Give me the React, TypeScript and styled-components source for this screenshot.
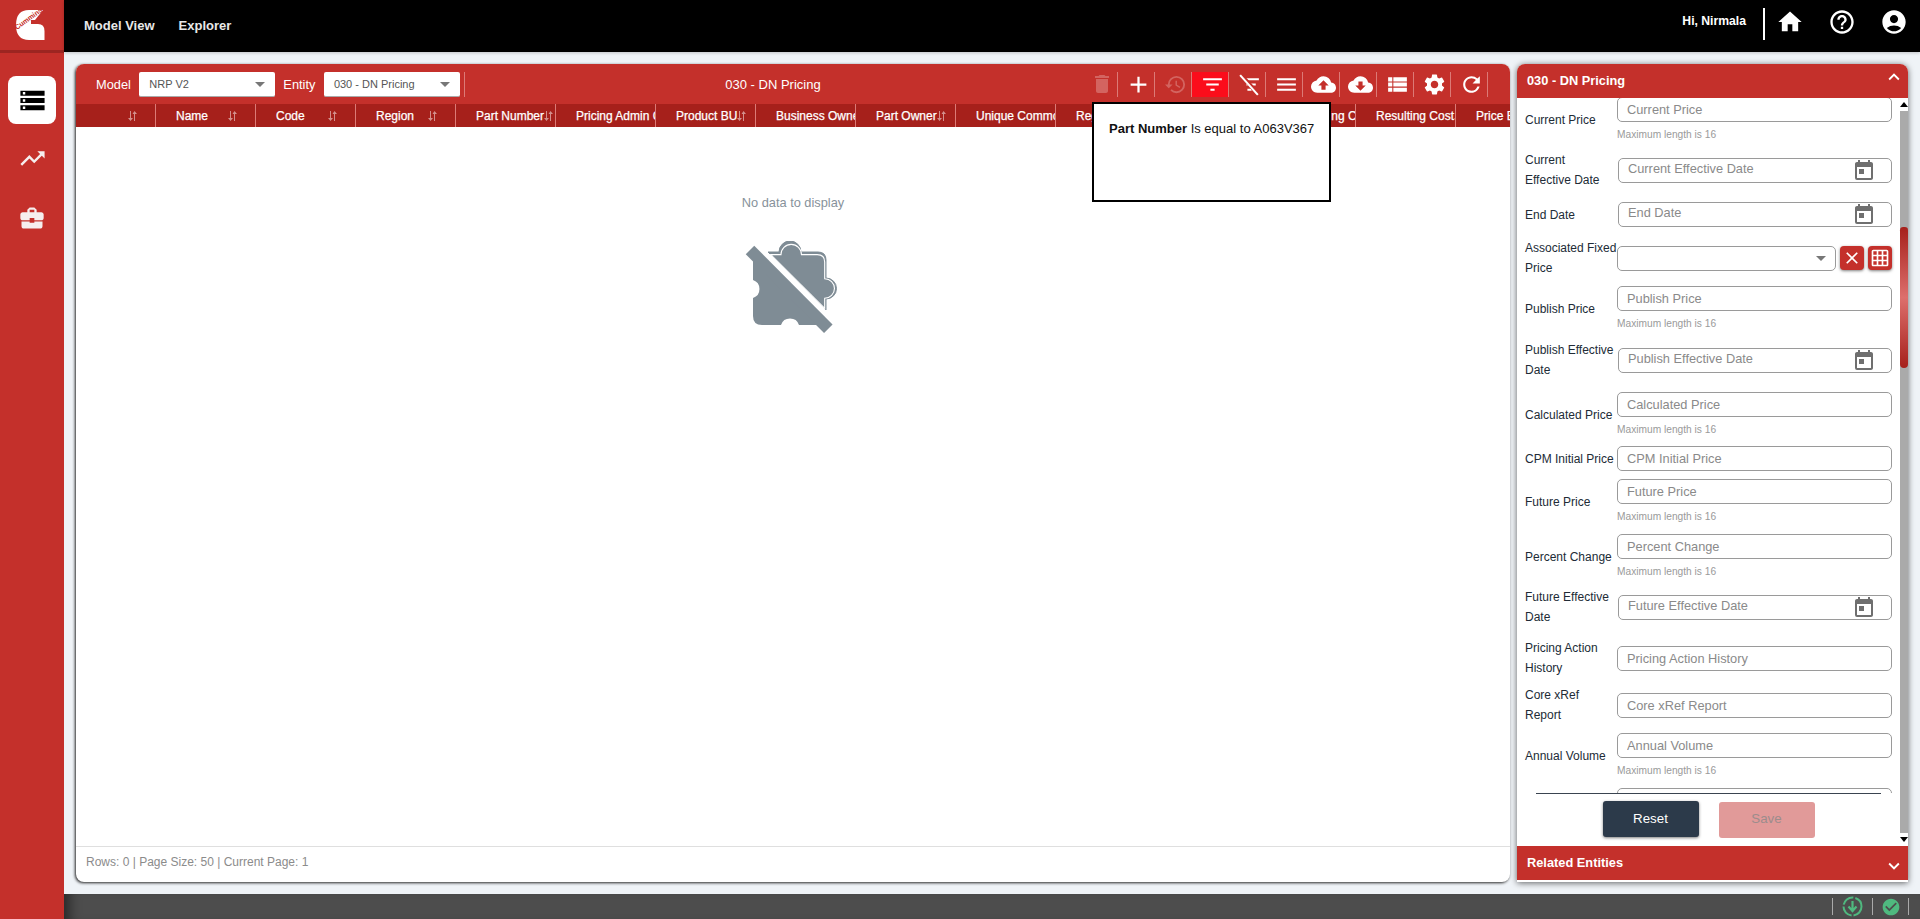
import { ReactNode } from "react";
import styled, { createGlobalStyle } from "styled-components";
import {
  MdAccountCircle,
  MdAdd,
  MdArrowDropDown,
  MdBusinessCenter,
  MdCheckCircle,
  MdClose,
  MdCloudDownload,
  MdCloudUpload,
  MdDelete,
  MdExpandLess,
  MdExpandMore,
  MdFilterList,
  MdGridOn,
  MdHelpOutline,
  MdHistory,
  MdHome,
  MdMenu,
  MdRefresh,
  MdSettings,
  MdStorage,
  MdToday,
  MdTrendingUp,
  MdViewList,
} from "react-icons/md";

const RED = "#c4302b";
const DARK_RED = "#a6201b";

const GlobalStyle = createGlobalStyle`
  html, body {
    margin: 0;
    height: 100%;
    overflow: hidden;
    background: #eff3f7;
    font-family: "Liberation Sans", Arial, sans-serif;
  }
  * { box-sizing: border-box; }
`;

const Shell = styled.div`
  display: flex;
  width: 1920px;
  height: 919px;
`;

const Sidebar = styled.aside`
  width: 64px;
  flex-shrink: 0;
  background: ${RED};
  display: flex;
  flex-direction: column;
  align-items: center;
`;

const LogoCell = styled.div`
  width: 100%;
  height: 53px;
  border-bottom: 3px solid #9c2521;
  display: flex;
  align-items: center;
  justify-content: center;
`;

const SideNav = styled.nav`
  display: flex;
  flex-direction: column;
  gap: 10px;
  padding-top: 23px;
`;

const SideItem = styled.div<{ $active?: boolean; $drop?: number }>`
  width: 48px;
  height: 48px;
  border-radius: 8px;
  margin-top: ${(p) => p.$drop ?? 0}px;
  display: flex;
  align-items: center;
  justify-content: center;
  background: ${(p) => (p.$active ? "#fff" : "transparent")};
  color: ${(p) => (p.$active ? "#000" : "#f6eeee")};
`;

const Main = styled.div`
  flex: 1;
  display: flex;
  flex-direction: column;
  min-width: 0;
`;

const TopBar = styled.header`
  height: 52px;
  background: #000;
  color: #fff;
  display: flex;
  align-items: center;
  padding: 0 12px 2px 20px;
  box-shadow: 0 1px 3px rgba(0, 0, 0, 0.2);
`;

const TopLink = styled.span`
  font-size: 13px;
  font-weight: 700;
  color: #e8e8e8;
  margin-right: 24px;
`;

const TopRight = styled.div`
  margin-left: auto;
  align-self: flex-start;
  padding-top: 8px;
  display: flex;
  align-items: flex-start;
`;

const Greeting = styled.span`
  font-size: 12.2px;
  font-weight: 700;
  padding-right: 17px;
  border-right: 2px solid #fff;
  height: 32px;
  line-height: 26px;
  margin-right: 11px;
`;

const TopIcon = styled.span`
  display: flex;
  width: 28px;
  margin-right: 24px;
  &:last-child {
    margin-right: 0;
  }
`;

const Content = styled.div`
  flex: 1;
  display: flex;
  gap: 7px;
  padding: 12px;
  min-height: 0;
`;

const GridWrap = styled.div`
  position: relative;
  width: 1434px;
  flex-shrink: 0;
`;

const GridPanel = styled.section`
  width: 100%;
  height: 100%;
  display: flex;
  flex-direction: column;
  background: #fff;
  border-radius: 8px;
  overflow: hidden;
  box-shadow: -1px 1px 3px rgba(0, 0, 0, 0.85);
`;

const Toolbar = styled.div`
  height: 40px;
  flex-shrink: 0;
  background: ${RED};
  color: #fff;
  display: flex;
  align-items: center;
  padding: 0 22px 0 20px;
`;

const ToolLabel = styled.span`
  font-size: 12.8px;
  margin-right: 8.5px;
`;

const RedSelect = styled.div`
  width: 136px;
  height: 25px;
  background: #fff;
  border-radius: 2px;
  border-bottom: 1px solid #aaa;
  color: #555;
  font-size: 11px;
  display: flex;
  align-items: center;
  justify-content: space-between;
  padding: 0 3px 0 10px;
  margin-right: 8px;
`;

const ToolDivider = styled.span`
  width: 1px;
  height: 25px;
  background: #dc7a76;
  margin-left: -4px;
`;

const Title = styled.div`
  flex: 1;
  text-align: center;
  font-size: 13px;
`;

const ToolButtons = styled.div`
  display: flex;
`;

const ToolButton = styled.span<{ $active?: boolean; $dim?: boolean }>`
  width: 37px;
  height: 25px;
  display: flex;
  align-items: center;
  justify-content: center;
  padding-left: 5px;
  border-right: 1px solid #dc7a76;
  background: ${(p) => (p.$active ? "#fb0d1b" : "transparent")};
  color: ${(p) => (p.$dim ? "rgba(255,255,255,0.25)" : "#fff")};
`;

const HeaderRow = styled.div`
  height: 23px;
  flex-shrink: 0;
  display: flex;
  background: ${DARK_RED};
  overflow: hidden;
`;

const HeaderCell = styled.div<{ $first?: boolean }>`
  width: ${(p) => (p.$first ? 80 : 100)}px;
  flex-shrink: 0;
  display: flex;
  align-items: center;
  overflow: hidden;
  white-space: nowrap;
  padding-left: ${(p) => (p.$first ? 0 : 20)}px;
  border-right: 1px solid #dc7a76;
  color: #fff;
  font-size: 12px;
  -webkit-text-stroke: 0.25px #fff;
`;

const HeaderText = styled.span`
  min-width: 52px;
  flex-shrink: 0;
`;

const SortIcon = styled.svg`
  width: 9px;
  height: 10px;
  flex-shrink: 0;
  color: rgba(255, 255, 255, 0.5);
`;

const GridBody = styled.div`
  flex: 1;
  display: flex;
  flex-direction: column;
  align-items: center;
  padding-top: 68px;
`;

const EmptyText = styled.div`
  font-size: 12.8px;
  line-height: 16px;
  color: #87929b;
  margin-bottom: 30px;
`;

const GridFooter = styled.div`
  height: 36px;
  flex-shrink: 0;
  border-top: 1px solid #dfdfdf;
  padding: 0 10px 5px;
  display: flex;
  align-items: center;
  font-size: 12px;
  color: #8b8b8b;
`;

const FilterTip = styled.div`
  position: absolute;
  left: 1016px;
  top: 38px;
  width: 239px;
  height: 100px;
  background: #fff;
  border: 2px solid #000;
  padding: 17px 15px;
  font-size: 13px;
  line-height: 16px;
  white-space: nowrap;
  color: #111;
  b {
    font-weight: 700;
  }
`;

const FormPanel = styled.aside`
  width: 391px;
  flex-shrink: 0;
  display: flex;
  flex-direction: column;
  background: #fff;
  border-radius: 8px 8px 0 0;
  overflow: hidden;
  box-shadow: 0 1px 6px rgba(0, 0, 0, 0.6);
`;

const PanelBar = styled.div`
  height: 34px;
  flex-shrink: 0;
  background: ${RED};
  color: #fff;
  font-size: 12.8px;
  font-weight: 700;
  display: flex;
  align-items: center;
  justify-content: space-between;
  padding: 0 3px 2px 10px;
`;

const Chevron = styled.span<{ $up?: boolean }>`
  display: flex;
  margin: ${(p) => (p.$up ? "0 0 6px" : "7px 0 0")};
`;

const PanelBody = styled.div`
  position: relative;
  flex: 1;
  min-height: 0;
  display: flex;
`;

const FormScroll = styled.div`
  flex: 1;
  overflow: hidden;
  padding: 0 8px;
`;

const FormList = styled.div`
  margin-top: -1px;
`;

const Row = styled.div<{ $gap: number; $h: number }>`
  display: grid;
  grid-template-columns: 92px 275px;
  height: ${(p) => p.$h}px;
  margin-top: ${(p) => p.$gap}px;
  align-items: start;
`;

const RowLabel = styled.label`
  align-self: center;
  font-size: 12px;
  line-height: 20px;
  color: #212b36;
  white-space: pre-line;
`;

const FieldBox = styled.div<{ $date?: boolean; $mid?: boolean }>`
  position: relative;
  align-self: ${(p) => (p.$mid ? "center" : "start")};
  padding-left: ${(p) => (p.$date ? 1 : 0)}px;
`;

const TextInput = styled.input<{ $date?: boolean }>`
  display: block;
  width: 100%;
  height: 25px;
  border: 1px solid #9a9a9a;
  border-radius: 5px;
  outline: none;
  background: #fff;
  padding: ${(p) => (p.$date ? "0 0 4px 9px" : "0 9px")};
  font-family: inherit;
  font-size: 12.8px;
  &::placeholder {
    color: #8a8a8a;
    opacity: 1;
  }
`;

const Hint = styled.div`
  font-size: 10.2px;
  line-height: 12px;
  margin-top: 7px;
  color: #9a9a9a;
`;

const CalendarIcon = styled.span`
  position: absolute;
  right: 16px;
  top: 1px;
  display: flex;
  color: #6f6f6f;
`;

const LookupWrap = styled.div`
  display: flex;
  gap: 4px;
  align-self: center;
  align-items: flex-start;
`;

const LookupSelect = styled.div`
  width: 219px;
  height: 25px;
  border: 1px solid #9a9a9a;
  border-radius: 5px;
  display: flex;
  align-items: center;
  justify-content: flex-end;
  padding-right: 2px;
  color: #777;
`;

const SquareButton = styled.span`
  width: 24px;
  height: 24px;
  border-radius: 4px;
  background: ${RED};
  color: #fff;
  display: flex;
  align-items: center;
  justify-content: center;
  box-shadow: 0 1px 3px rgba(0, 0, 0, 0.5);
`;

const Scrollbar = styled.div`
  width: 8px;
  flex-shrink: 0;
  display: flex;
  flex-direction: column;
  align-items: center;
  padding: 4px 0;
`;

const ScrollArrow = styled.span<{ $down?: boolean }>`
  width: 0;
  height: 0;
  flex-shrink: 0;
  border-left: 4px solid transparent;
  border-right: 4px solid transparent;
  ${(p) => (p.$down ? "border-top: 5px solid #000;" : "border-bottom: 5px solid #000;")}
`;

const ScrollTrack = styled.div`
  flex: 1;
  width: 100%;
  margin: 4px 0;
  background: #aaa;
  padding-top: 116px;
`;

const ScrollThumb = styled.div`
  height: 141px;
  border-radius: 4px 4px 5px 5px;
  background: linear-gradient(#a6201b, #dd6f6c 50%, #a6201b);
`;

const ActionBar = styled.div`
  position: absolute;
  left: 0;
  right: 8px;
  bottom: 0;
  height: 53px;
  background: #fff;
  display: flex;
  justify-content: center;
  gap: 20px;
  padding-top: 8px;
  &::before {
    content: "";
    position: absolute;
    left: 19px;
    right: 19px;
    top: 0;
    height: 1px;
    background: #3a4450;
  }
`;

const ActionButton = styled.span<{ $primary?: boolean }>`
  width: 96px;
  height: 36px;
  border-radius: 3px;
  margin-top: ${(p) => (p.$primary ? 0 : 1)}px;
  padding-bottom: ${(p) => (p.$primary ? 2 : 4)}px;
  display: flex;
  align-items: center;
  justify-content: center;
  font-size: 13.33px;
  background: ${(p) => (p.$primary ? "#2c3a4a" : "#e19a99")};
  color: ${(p) => (p.$primary ? "#fff" : "#9c8c8c")};
  box-shadow: ${(p) => (p.$primary ? "0 1px 3px rgba(0,0,0,0.5)" : "none")};
`;

const PanelStrip = styled.div`
  height: 2px;
  flex-shrink: 0;
  background: #fff;
`;

const StatusBar = styled.footer`
  height: 25px;
  flex-shrink: 0;
  background: #4d4d4d;
  box-shadow: inset 14px 0 12px -8px rgba(0, 0, 0, 0.45);
  display: flex;
  justify-content: flex-end;
  align-items: center;
  padding-right: 11px;
`;

const StatusCell = styled.span<{ $w: number }>`
  width: ${(p) => p.$w}px;
  height: 17px;
  display: flex;
  align-items: center;
  justify-content: center;
  border-left: 1px solid #aaa;
`;

const Logo = () => (
  <svg width="64" height="50" viewBox="0 0 64 50">
    <path
      d="M43 10H29Q16 10 16 25Q16 40 29 40H44.5V31Q44.5 24 38 24H31L31 20H35Z"
      fill="#fff"
    />
    <text
      x="17"
      y="30"
      fontSize="7"
      fontWeight="700"
      fill={RED}
      fontFamily="Liberation Sans, sans-serif"
      transform="rotate(-36 17 30)"
    >
      Cummins
    </text>
  </svg>
);

const SortGlyph = () => (
  <SortIcon viewBox="0 0 9 10">
    <path d="M2 0v7H0l2.5 3L5 7H3V0zM6 10V3H4.5L6.5 0 9 3H7v7z" fill="currentColor" />
  </SortIcon>
);

const EmptyPuzzle = () => (
  <svg width="100" height="92" viewBox="0 -2 100 92">
    <path
      d="M10 17V37A9.5 9.5 0 0 1 10 55V73Q10 82 19 82H38A9.5 9.5 0 0 1 56 82H75Z"
      fill="#7f8c95"
    />
    <path d="M7 7L85.3 85.7" stroke="#7f8c95" strokeWidth="12" />
    <path
      d="M25 9H36A11 11 0 0 1 58 9H75Q83 9 83 17V35A10.5 10.5 0 0 1 83 56V67Z"
      fill="#7f8c95"
      stroke="#7f8c95"
      strokeWidth="1"
    />
    <path
      d="M25 9H36A11 11 0 0 1 58 9H75Q83 9 83 17V35A10.5 10.5 0 0 1 83 56V67Z"
      fill="none"
      stroke="#fff"
      strokeWidth="1.2"
      transform="translate(4.5 3.2) scale(0.93)"
    />
  </svg>
);

const SyncGlyph = () => (
  <svg width="21" height="21" viewBox="0 0 21 21" fill="none" stroke="#4fb97f">
    <circle cx="10.5" cy="10.5" r="9" strokeWidth="2" strokeDasharray="13 2" />
    <path d="M10.5 5v9M6.5 10.5l4 4.5 4-4.5" strokeWidth="2.2" />
  </svg>
);

const FilterOff = () => (
  <svg width="25" height="25" viewBox="0 0 24 24" fill="none" strokeWidth="2">
    <path d="M8 7h13M9 12h9M10 17h4" stroke="#fff" />
    <path d="M4 3l17 19" stroke={RED} strokeWidth="4" />
    <path d="M3 3l17 19" stroke="#fff" />
  </svg>
);

const columns = [
  "",
  "Name",
  "Code",
  "Region",
  "Part Number",
  "Pricing Admin Contact",
  "Product BU",
  "Business Owner",
  "Part Owner",
  "Unique Commodity",
  "Region Code",
  "Part Status",
  "FX Resulting Cost",
  "Resulting Cost",
  "Price Basis",
];

const tools: { icon: ReactNode; active?: boolean; dim?: boolean }[] = [
  { icon: <MdDelete size={24} />, dim: true },
  { icon: <MdAdd size={27} /> },
  { icon: <MdHistory size={23} />, dim: true },
  { icon: <MdFilterList size={25} />, active: true },
  { icon: <FilterOff /> },
  { icon: <MdMenu size={25} /> },
  { icon: <MdCloudUpload size={25} /> },
  { icon: <MdCloudDownload size={25} /> },
  { icon: <MdViewList size={25} /> },
  { icon: <MdSettings size={25} /> },
  { icon: <MdRefresh size={25} /> },
];

type Field = {
  label: string;
  gap: number;
  h: number;
  hint?: boolean;
  date?: boolean;
  lookup?: boolean;
};

const fields: Field[] = [
  { label: "Current Price", gap: 0, h: 46, hint: true },
  { label: "Current\nEffective Date", gap: 7, h: 40, date: true },
  { label: "End Date", gap: 12, h: 25, date: true },
  { label: "Associated Fixed\nPrice", gap: 11, h: 40, lookup: true },
  { label: "Publish Price", gap: 8, h: 46, hint: true },
  { label: "Publish Effective\nDate", gap: 8, h: 40, date: true },
  { label: "Calculated Price", gap: 12, h: 46, hint: true },
  { label: "CPM Initial Price", gap: 8, h: 25 },
  { label: "Future Price", gap: 8, h: 46, hint: true },
  { label: "Percent Change", gap: 9, h: 46, hint: true },
  { label: "Future Effective\nDate", gap: 7, h: 40, date: true },
  { label: "Pricing Action\nHistory", gap: 11, h: 40 },
  { label: "Core xRef\nReport", gap: 7, h: 40 },
  { label: "Annual Volume", gap: 8, h: 46, hint: true },
  { label: "", gap: 9, h: 25 },
];

const FormRow = ({ field }: { field: Field }) => {
  const placeholder = field.label.replace("\n", " ");
  return (
    <Row $gap={field.gap} $h={field.h}>
      <RowLabel>{field.label}</RowLabel>
      {field.lookup ? (
        <LookupWrap>
          <LookupSelect>
            <MdArrowDropDown size={24} />
          </LookupSelect>
          <SquareButton>
            <MdClose size={20} />
          </SquareButton>
          <SquareButton>
            <MdGridOn size={20} />
          </SquareButton>
        </LookupWrap>
      ) : (
        <FieldBox $date={field.date} $mid={field.date || (!field.hint && field.h > 25)}>
          <TextInput $date={field.date} placeholder={placeholder} readOnly />
          {field.date && (
            <CalendarIcon>
              <MdToday size={24} />
            </CalendarIcon>
          )}
          {field.hint && <Hint>Maximum length is 16</Hint>}
        </FieldBox>
      )}
    </Row>
  );
};

export default function App() {
  return (
    <>
      <GlobalStyle />
      <Shell>
        <Sidebar>
          <LogoCell>
            <Logo />
          </LogoCell>
          <SideNav>
            <SideItem $active>
              <MdStorage size={29} />
            </SideItem>
            <SideItem>
              <MdTrendingUp size={29} />
            </SideItem>
            <SideItem $drop={2}>
              <MdBusinessCenter size={28} />
            </SideItem>
          </SideNav>
        </Sidebar>
        <Main>
          <TopBar>
            <TopLink>Model View</TopLink>
            <TopLink>Explorer</TopLink>
            <TopRight>
              <Greeting>Hi, Nirmala</Greeting>
              <TopIcon>
                <MdHome size={28} />
              </TopIcon>
              <TopIcon>
                <MdHelpOutline size={28} />
              </TopIcon>
              <TopIcon>
                <MdAccountCircle size={28} />
              </TopIcon>
            </TopRight>
          </TopBar>
          <Content>
            <GridWrap>
              <GridPanel>
                <Toolbar>
                  <ToolLabel>Model</ToolLabel>
                  <RedSelect>
                    NRP V2
                    <MdArrowDropDown size={24} color="#777" />
                  </RedSelect>
                  <ToolLabel>Entity</ToolLabel>
                  <RedSelect>
                    030 - DN Pricing
                    <MdArrowDropDown size={24} color="#777" />
                  </RedSelect>
                  <ToolDivider />
                  <Title>030 - DN Pricing</Title>
                  <ToolButtons>
                    {tools.map((tool, index) => (
                      <ToolButton key={index} $active={tool.active} $dim={tool.dim}>
                        {tool.icon}
                      </ToolButton>
                    ))}
                  </ToolButtons>
                </Toolbar>
                <HeaderRow>
                  {columns.map((col, index) => (
                    <HeaderCell key={index} $first={index === 0}>
                      <HeaderText>{col}</HeaderText>
                      <SortGlyph />
                    </HeaderCell>
                  ))}
                </HeaderRow>
                <GridBody>
                  <EmptyText>No data to display</EmptyText>
                  <EmptyPuzzle />
                </GridBody>
                <GridFooter>Rows: 0 | Page Size: 50 | Current Page: 1</GridFooter>
              </GridPanel>
              <FilterTip>
                <b>Part Number</b> Is equal to A063V367
              </FilterTip>
            </GridWrap>
            <FormPanel>
              <PanelBar>
                030 - DN Pricing
                <Chevron $up>
                  <MdExpandLess size={22} />
                </Chevron>
              </PanelBar>
              <PanelBody>
                <FormScroll>
                  <FormList>
                    {fields.map((field, index) => (
                      <FormRow key={index} field={field} />
                    ))}
                  </FormList>
                </FormScroll>
                <Scrollbar>
                  <ScrollArrow />
                  <ScrollTrack>
                    <ScrollThumb />
                  </ScrollTrack>
                  <ScrollArrow $down />
                </Scrollbar>
                <ActionBar>
                  <ActionButton $primary>Reset</ActionButton>
                  <ActionButton>Save</ActionButton>
                </ActionBar>
              </PanelBody>
              <PanelBar>
                Related Entities
                <Chevron>
                  <MdExpandMore size={22} />
                </Chevron>
              </PanelBar>
              <PanelStrip />
            </FormPanel>
          </Content>
          <StatusBar>
            <StatusCell $w={40}>
              <SyncGlyph />
            </StatusCell>
            <StatusCell $w={36}>
              <MdCheckCircle size={20} color="#4fb97f" />
            </StatusCell>
            <StatusCell $w={1} />
          </StatusBar>
        </Main>
      </Shell>
    </>
  );
}
